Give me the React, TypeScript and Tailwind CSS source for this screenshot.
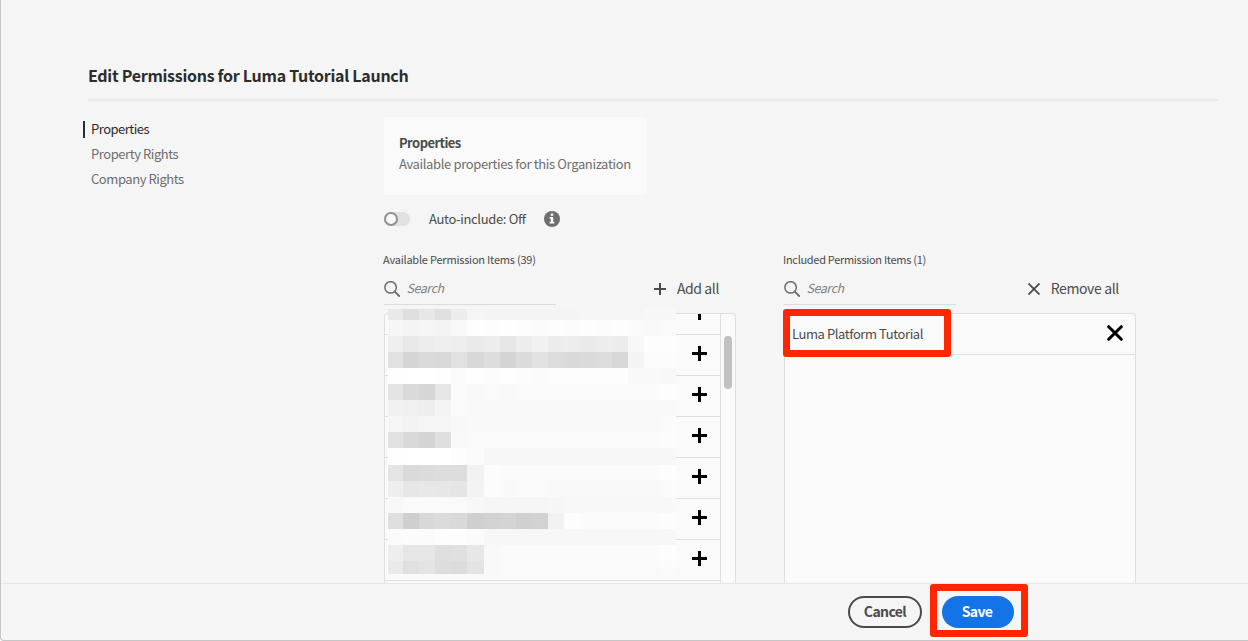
import React from "react";

const CELL_COLUMNS = "15px 16px 16px 16px 16px 17px repeat(12, 16px)";
const CELL_ROWS = "11px repeat(8, 16px) 17px repeat(6, 16px) 13px";

// Two hex digits per cell, each one a grey level.
const REDACTED_ROWS = [
  "e9 df e7 e0 ec f5 f4 f4 f4 f4 f4 f4 f5 f5 f5 f5 f7 f7",
  "f6 f4 f5 f4 f9 fe fd fe fd fb fd fc fd fc fd fa f9 fa",
  "ef e9 ed ef ee ea ed e6 ed f1 ec ed ea ed ec f8 fd fd",
  "e1 d5 da d9 e1 d8 dd d4 db e2 dc d9 da dc d7 f4 fc fc",
  "fe ff ff fe fb fe fc fe fc fb fd fd fd fd fd f9 f9 f8",
  "e4 da d6 e6 fb f9 fa f9 fa fa fa fa fa fa fa fa fa fd",
  "f1 f0 ee f4 fa f9 f9 f9 f9 f9 f9 f9 f9 f9 f9 f9 f9 f9",
  "f5 f3 f5 f5 f8 f9 f9 f9 f9 f9 f9 f9 f9 f9 f9 f9 f9 fb",
  "e2 d9 d4 df f9 fa fa fa fa fa fa fa fa fa fa fa fa fc",
  "fe ff ff ff fd fb f7 f7 f7 f7 f7 f7 f7 f7 f7 f7 f7 f7",
  "e5 da db dd dd f2 fc fa fa fa fa fa fa fa fa fa fa fd",
  "ee e6 e8 e7 e5 f3 fc f9 fa fa f9 f9 f9 f9 f9 f9 f9 fb",
  "f8 fa fa fa fa f8 f5 f5 f5 f5 f6 f8 f8 f8 f8 f8 f8 f8",
  "df cf d8 db d9 cf d2 d4 d0 d2 f2 fd fa fa fa fa fa fc",
  "fa fb fb fd fd fb f7 f7 f7 f7 f7 f7 f7 f7 f7 f7 f7 f7",
  "ee e6 e6 df e0 e7 f9 fa fa fa fa fa fa fa fa fa fa fd",
  "ea e0 e4 dd dc e3 f9 fa fa fa fa fa fa fa fa fa fa fb",
];

function RedactedText() {
  return (
    <div
      className="absolute left-[3px] top-[-5px] grid"
      style={{ gridTemplateColumns: CELL_COLUMNS, gridTemplateRows: CELL_ROWS }}
    >
      {REDACTED_ROWS.flatMap((row, y) =>
        row.split(" ").map((level, x) => (
          <div key={`${y}-${x}`} style={{ backgroundColor: `#${level}${level}${level}` }} />
        ))
      )}
    </div>
  );
}

function SearchField() {
  return (
    <div className="flex h-8 w-[172px] items-center gap-[6.5px] border-b border-[#dcdcdc]">
      <svg className="size-4 shrink-0" viewBox="0 0 16 16" fill="none" stroke="#6e6e6e">
        <circle cx="6.6" cy="6.4" r="5.7" strokeWidth="1.5" />
        <path d="M10.8 10.6 15.2 15" strokeWidth="1.9" strokeLinecap="round" />
      </svg>
      <span className="pb-0.5 text-[12.5px] italic leading-4 tracking-[-0.45px] text-[#808080]">Search</span>
    </div>
  );
}

function PlusIcon() {
  return (
    <svg className="size-[15px]" viewBox="0 0 15 15" shapeRendering="crispEdges">
      <path d="M6 0h3v6h6v3H9v6H6V9H0V6h6z" fill="#000" />
    </svg>
  );
}

function PermissionRow() {
  return (
    <div className="flex h-[41px] shrink-0 items-center justify-end border-b border-[#dfdfdf] pb-[3px] pr-[13px]">
      <PlusIcon />
    </div>
  );
}

function NavItem({ label, active = false }: { label: string; active?: boolean }) {
  return (
    <li className="flex h-[25px] items-center gap-1.5">
      <span className={active ? "h-[17px] w-0.5 bg-[#2c2c2c]" : "h-[17px] w-0.5"} />
      <span
        className={
          active
            ? "pb-0.5 text-[13px] leading-[17px] tracking-[-0.5px] text-[#2c2c2c]"
            : "pb-0.5 text-[13px] leading-[17px] tracking-[-0.44px] text-[#6e6e6e]"
        }
      >
        {label}
      </span>
    </li>
  );
}

function AvailableItems() {
  return (
    <section className="flex w-[352px] flex-col">
      <h3 className="-ml-px h-4 text-[11px] leading-[14px] tracking-[-0.21px] text-[#4b4b4b]">
        Available Permission Items (39)
      </h3>
      <div className="mt-[5px] flex h-8 items-center justify-between pr-[17px]">
        <SearchField />
        <button className="flex items-center gap-[11px] text-[#4b4b4b]">
          <svg className="size-3" viewBox="0 0 12 12" shapeRendering="crispEdges">
            <path d="M5 0h2v5h5v2H7v5H5V7H0V5h5z" fill="currentColor" />
          </svg>
          <span className="pb-0.5 text-[14px] leading-4 tracking-[-0.4px]">Add all</span>
        </button>
      </div>
      <div className="relative mt-2 flex h-[270px] rounded-t border border-b-0 border-[#dfdfdf] bg-[#fafafa]">
        <div className="flex h-[269px] w-[336px] shrink-0 flex-col justify-end overflow-hidden border-r border-[#dfdfdf] pb-0.5">
          {Array.from({ length: 7 }, (_, i) => (
            <PermissionRow key={i} />
          ))}
        </div>
        <div className="flex grow justify-center pt-[22px]">
          <div className="h-[53px] w-2 rounded-full bg-[#c1c1c1]" />
        </div>
        <RedactedText />
      </div>
    </section>
  );
}

function IncludedItems() {
  return (
    <section className="flex w-[352px] flex-col">
      <h3 className="-ml-px h-4 text-[11px] leading-[14px] tracking-[-0.3px] text-[#4b4b4b]">
        Included Permission Items (1)
      </h3>
      <div className="mt-[5px] flex h-8 items-center justify-between pr-[17px]">
        <SearchField />
        <button className="flex items-center gap-[11px] text-[#4b4b4b]">
          <svg className="size-3" viewBox="0 0 12 12" stroke="currentColor" strokeWidth="1.8">
            <path d="M.5.5l11 11M11.5.5l-11 11" />
          </svg>
          <span className="pb-0.5 text-[14px] leading-4 tracking-[-0.35px]">Remove all</span>
        </button>
      </div>
      <div className="relative mt-2 h-[270px] rounded-t border border-b-0 border-[#dfdfdf] bg-[#fafafa]">
        <div className="flex h-[41px] items-center justify-between border-b border-[#dfdfdf] pl-[7px] pr-3">
          <span className="text-[13px] leading-4 tracking-[-0.42px] text-[#4b4b4b]">
            Luma Platform Tutorial
          </span>
          <svg className="-mt-0.5 size-4" viewBox="0 0 16 16" stroke="#000" strokeWidth="3" strokeLinecap="round">
            <path d="M1.7 1.7l12.6 12.6M14.3 1.7 1.7 14.3" />
          </svg>
        </div>
        <div className="absolute left-[-2px] top-[-5px] h-12 w-[168px] rounded-[3px] border-[7px] border-[#ff2600]" />
      </div>
    </section>
  );
}

export default function App() {
  return (
    <div className="h-[641px] w-[1248px] overflow-hidden bg-white font-['Noto_Sans_CJK_JP','Noto_Sans',sans-serif]">
      <div className="flex h-full flex-col rounded-bl border-b border-l border-[#c6c6c6] bg-[#f5f5f5]">
        <main className="flex h-[583px] shrink-0 flex-col overflow-hidden pl-[87px] pr-[30px] pt-16">
          <h1 className="h-[37px] border-b-2 border-[#eaeaea] text-[16px] font-bold leading-[22px] tracking-[-0.29px] text-[#2c2c2c]">
            Edit Permissions for Luma Tutorial Launch
          </h1>
          <div className="flex pt-4">
            <nav className="-ml-[5px] w-[301px] shrink-0">
              <ul>
                <NavItem label="Properties" active />
                <NavItem label="Property Rights" />
                <NavItem label="Company Rights" />
              </ul>
            </nav>
            <div className="flex flex-col">
              <div className="h-[78px] w-[263px] bg-[#fafafa] pl-[15px] pt-[15px]">
                <h2 className="text-[13px] font-bold leading-[21px] tracking-[-0.56px] text-[#4b4b4b]">Properties</h2>
                <p className="whitespace-nowrap text-[13px] leading-[21px] tracking-[-0.36px] text-[#6e6e6e]">
                  Available properties for this Organization
                </p>
              </div>
              <div className="mt-3.5 flex h-5 items-center">
                <span className="flex h-3.5 w-[26px] rounded-full bg-[#e1e1e1]">
                  <span className="size-3.5 rounded-full border-2 border-[#909090] bg-[#fafafa]" />
                </span>
                <span className="ml-[19px] w-[98px] whitespace-nowrap text-[13px] leading-5 tracking-[-0.34px] text-[#4b4b4b]">
                  Auto-include: Off
                </span>
                <svg className="ml-[17px] size-4" viewBox="0 0 16 16">
                  <circle cx="8" cy="8" r="8" fill="#6e6e6e" />
                  <path d="M6.8 2.6h2.4v2.2H6.8zM5.6 6h3.6v5h1.2v1.6H5.6V11h1.2V7.6H5.6z" fill="#fff" />
                </svg>
              </div>
              <div className="mt-[23px] flex gap-12">
                <AvailableItems />
                <IncludedItems />
              </div>
            </div>
          </div>
        </main>
        <footer className="relative flex grow items-start gap-5 border-t border-[#e6e6e6] pl-[847px] pt-3">
          <button className="h-8 w-[74px] rounded-full border-2 border-[#4b4b4b] pb-0.5 text-[14px] font-bold leading-[26px] tracking-[-0.6px] text-[#4b4b4b]">
            Cancel
          </button>
          <button className="h-8 w-[72px] rounded-full bg-[#1473e6] pb-0.5 pr-0.5 text-[14px] font-bold leading-[30px] tracking-[-0.6px] text-white">
            Save
          </button>
          <div className="absolute left-[929px] top-0 h-[53px] w-[98px] rounded-[3px] border-[7px] border-[#ff2600]" />
        </footer>
      </div>
    </div>
  );
}
